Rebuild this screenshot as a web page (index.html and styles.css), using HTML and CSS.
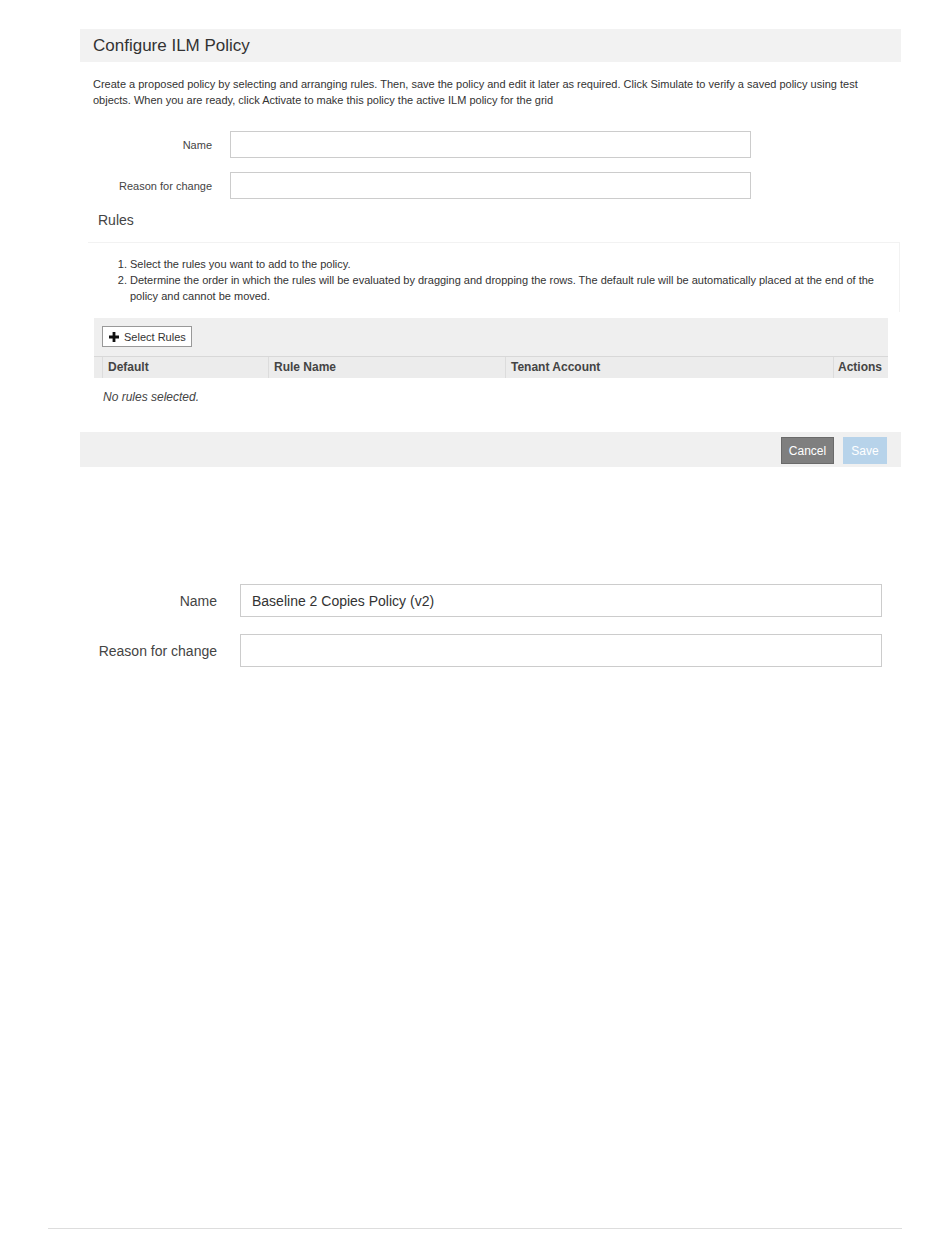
FILE: index.html
```html
<!DOCTYPE html>
<html lang="en">
<head>
  <meta charset="UTF-8" />
  <title>Configure ILM Policy</title>
  <link rel="stylesheet" href="styles.css">
</head>
<body>
  <div class="panel">
    <div class="panel-head">Configure ILM Policy</div>

    <p class="intro">Create a proposed policy by selecting and arranging rules. Then, save the policy and edit it later as required. Click Simulate to verify a saved policy using test objects. When you are ready, click Activate to make this policy the active ILM policy for the grid</p>

    <div class="form small">
      <div class="form-row">
        <label>Name</label>
        <input type="text" />
      </div>
      <div class="form-row">
        <label>Reason for change</label>
        <input type="text" />
      </div>
    </div>

    <h3 class="rules-title">Rules</h3>
    <div class="rules-help">
      <ol>
        <li>Select the rules you want to add to the policy.</li>
        <li>Determine the order in which the rules will be evaluated by dragging and dropping the rows. The default rule will be automatically placed at the end of the policy and cannot be moved.</li>
      </ol>
    </div>

    <div class="grid">
      <div class="toolbar">
        <button type="button" class="select-btn">
          <svg width="10" height="10" viewBox="0 0 10 10"><path d="M3.6 0h2.8v3.6H10v2.8H6.4V10H3.6V6.4H0V3.6h3.6z" fill="#111"/></svg>
          Select Rules
        </button>
      </div>
      <div class="grid-head">
        <div class="col col-default">Default</div>
        <div class="col col-name">Rule Name</div>
        <div class="col col-tenant">Tenant Account</div>
        <div class="col col-actions">Actions</div>
      </div>
      <div class="empty">No rules selected.</div>
    </div>

    <div class="panel-foot">
      <button type="button" class="btn btn-cancel">Cancel</button>
      <button type="button" class="btn btn-save">Save</button>
    </div>
  </div>

  <div class="form large">
    <div class="form-row">
      <label>Name</label>
      <input type="text" value="Baseline 2 Copies Policy (v2)" />
    </div>
    <div class="form-row">
      <label>Reason for change</label>
      <input type="text" />
    </div>
  </div>

  <div class="page-rule"></div>
</body>
</html>
```

FILE: styles.css
```css
* {
  box-sizing: border-box;
}
body {
  margin: 0;
  padding-top: 29px;
  font-family: "Liberation Sans", Arial, sans-serif;
  color: #333;
  background: #fff;
}
.panel {
  margin-left: 80px;
  width: 821px;
}
.panel-head {
  height: 33px;
  line-height: 33px;
  padding-left: 13px;
  background: #f2f2f2;
  font-size: 17px;
  color: #333;
}
.intro {
  margin: 14px 0 0;
  padding: 0 13px;
  font-size: 11px;
  line-height: 16px;
  color: #333;
}
.form-row {
  display: flex;
  align-items: center;
}
.form-row label {
  text-align: right;
  color: #444;
}
.form-row input {
  border: 1px solid #ccc;
  background: #fff;
  font-family: inherit;
  color: #333;
}
.form.small {
  margin-top: 23px;
}
.form.small .form-row {
  margin-bottom: 14px;
}
.form.small .form-row:last-child {
  margin-bottom: 11px;
}
.form.small label {
  width: 132px;
  margin-right: 18px;
  font-size: 11px;
}
.form.small input {
  width: 521px;
  height: 27px;
}
.rules-title {
  margin: 0;
  padding: 0 0 0 18px;
  font-size: 14px;
  font-weight: normal;
  line-height: 20px;
  color: #444;
}
.rules-help {
  margin: 12px 1px 0 8px;
  padding: 13px 0 8px;
  border-top: 1px solid #f2f2f2;
  border-right: 1px solid #f2f2f2;
}
.rules-help ol {
  margin: 0;
  padding-left: 42px;
  padding-right: 8px;
  font-size: 11px;
  line-height: 16px;
}
.grid {
  margin: 6px 13px 0 14px;
}
.toolbar {
  background: #efefef;
  padding: 8px 8px 9px;
}
.select-btn {
  display: inline-flex;
  align-items: center;
  gap: 5px;
  height: 21px;
  padding: 0 5px 0 6px;
  border: 1px solid #999;
  background: #fff;
  font-family: inherit;
  font-size: 11px;
  color: #333;
}
.grid-head {
  display: flex;
  background: #ececec;
  border-top: 1px solid #d8d8d8;
  height: 22px;
}
.col {
  font-size: 12px;
  font-weight: bold;
  line-height: 21px;
  color: #444;
  padding-left: 5px;
  border-left: 1px solid #dcdcdc;
}
.col-default {
  width: 166px;
  margin-left: 8px;
}
.col-name {
  width: 237px;
}
.col-tenant {
  width: 328px;
}
.col-actions {
  flex: 1;
  padding-left: 4px;
}
.empty {
  padding: 12px 9px 0;
  font-size: 12px;
  font-style: italic;
  color: #444;
  height: 54px;
}
.panel-foot {
  display: flex;
  justify-content: flex-end;
  gap: 9px;
  background: #f0f0f0;
  height: 35px;
  padding: 5px 14px 0 0;
}
.btn {
  height: 27px;
  border: none;
  color: #fff;
  font-family: inherit;
  font-size: 12px;
}
.btn-cancel {
  width: 53px;
  background: #7f7f7f;
  border: 1px solid #6a6a6a;
}
.btn-save {
  width: 44px;
  background: #b7d3ea;
}
.form.large {
  margin-top: 117px;
  margin-left: 80px;
}
.form.large .form-row {
  margin-bottom: 17px;
}
.form.large label {
  width: 137px;
  margin-right: 23px;
  font-size: 14px;
}
.form.large input {
  width: 642px;
  height: 33px;
  padding: 0 11px;
  font-size: 14px;
}
.page-rule {
  margin: 561px 0 0 48px;
  width: 854px;
  border-top: 1px solid #ddd;
}
```
